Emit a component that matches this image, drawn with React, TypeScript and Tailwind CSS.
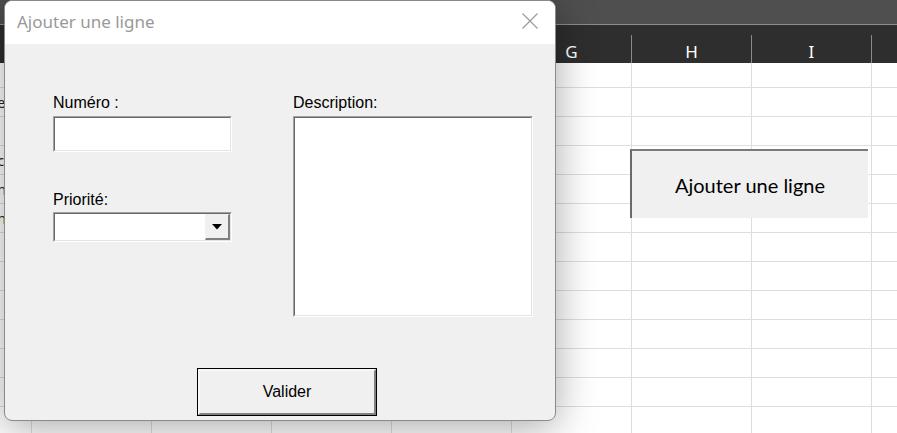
import React from "react";

const COLS = [0, 1, 2, 3, 4, 5, 6, 7];
const HEADERS = ["", "", "", "", "G", "H", "I", ""];
const ROW_CHARS = ["", "e", "", "c", "n", "n", "", "", "", "", "", "", ""];

function SheetRow({ first, char }: { first?: boolean; char: string }) {
  return (
    <div className={`flex border-b border-[#dedede] ${first ? "h-[25px]" : "h-[29px]"}`}>
      <div className="w-[32px] shrink-0 border-r border-[#dedede] relative overflow-hidden">
        {char && (
          <span className="absolute left-[-3px] top-[4px] text-[15px] leading-[20px] text-[#222]" style={{ fontFamily: "'Noto Sans', sans-serif" }}>
            {char}
          </span>
        )}
      </div>
      {COLS.map((c) => (
        <div key={c} className="w-[120px] shrink-0 border-r border-[#dedede]" />
      ))}
    </div>
  );
}

function Sunken({ className, children }: { className?: string; children?: React.ReactNode }) {
  return (
    <div className={`border-t border-l border-[#a0a0a0] border-b border-r border-b-white border-r-white ${className ?? ""}`}>
      <div className="w-full h-full bg-white border-t border-l border-[#696969] border-b border-r border-b-[#e3e3e3] border-r-[#e3e3e3] relative">
        {children}
      </div>
    </div>
  );
}

export default function App() {
  const label = { fontFamily: "'Liberation Sans', Arial, sans-serif" };
  return (
    <div className="relative w-[897px] h-[433px] overflow-hidden bg-white">
      {/* Excel sheet */}
      <div className="flex flex-col">
        <div className="h-[25px] bg-[#4f4f4f] border-b border-[#8c8c8c]" />
        <div className="h-[38px] bg-[#2e2e2e] flex items-end">
          <div className="w-[32px] shrink-0 h-[28px] border-r border-[#8a8a8a]" />
          {COLS.map((c) => (
            <div
              key={c}
              className="w-[120px] shrink-0 h-[28px] border-r border-[#8a8a8a] text-center text-white text-[17px] leading-[33px]"
              style={{ fontFamily: "'Noto Sans', sans-serif" }}
            >
              {HEADERS[c]}
            </div>
          ))}
        </div>
        {ROW_CHARS.map((ch, i) => (
          <SheetRow key={i} first={i === 0} char={ch} />
        ))}
      </div>

      {/* Sheet button */}
      <div
        className="absolute left-[630px] top-[149px] w-[238px] h-[69px] bg-[#f0f0f0] border-t-2 border-l-2 border-t-[#7a7a7a] border-l-[#6a6a6a] flex items-center justify-center text-[20px] text-black"
        style={{ fontFamily: "Lato, 'Noto Sans', sans-serif" }}
      >
        Ajouter une ligne
      </div>

      {/* Dialog */}
      <div className="absolute left-[4px] top-0 w-[552px] h-[421px] rounded-[8px] border border-[#8a8a8a] bg-[#f0f0f0] overflow-hidden shadow-[0_6px_40px_rgba(0,0,0,0.35)] flex flex-col">
        <div className="h-[43px] bg-white flex items-start justify-between pt-[9px] pl-[12px] pr-[17px]">
          <span className="text-[17px] leading-[24px] text-[#999999]" style={{ fontFamily: "'Noto Sans', sans-serif" }}>
            Ajouter une ligne
          </span>
          <svg width="16" height="16" viewBox="0 0 16 16" className="mt-[3px]">
            <path d="M0.5 0.5 L15.5 15.5 M15.5 0.5 L0.5 15.5" stroke="#9a9a9a" strokeWidth="1.2" fill="none" />
          </svg>
        </div>
        <div className="flex-1 flex flex-col pt-[50px] pl-[48px]">
          <div className="flex gap-[61px]">
            <div className="w-[179px] flex flex-col">
              <div className="text-[16px] leading-[18px] text-black" style={label}>Numéro :</div>
              <Sunken className="mt-[4px] h-[36px]" />
              <div className="mt-[39px] text-[16px] leading-[18px] text-black" style={label}>Priorité:</div>
              <Sunken className="mt-[3px] h-[30px]">
                <div className="absolute right-0 top-0 bottom-0 w-[25px] bg-[#f0f0f0] border-t border-l border-[#f0f0f0] border-b-2 border-r-2 border-b-[#808080] border-r-[#808080] flex items-center justify-center">
                  <svg width="10" height="6" viewBox="0 0 10 6">
                    <path d="M0 0 H10 L5 5.5 Z" fill="#000" />
                  </svg>
                </div>
              </Sunken>
            </div>
            <div className="w-[240px] flex flex-col">
              <div className="text-[16px] leading-[18px] text-black" style={label}>Description:</div>
              <Sunken className="mt-[4px] h-[201px]" />
            </div>
          </div>
          <div className="mt-[51px] ml-[144px] w-[180px] h-[48px] border border-black bg-[#f0f0f0]">
            <div className="w-full h-full border-t-2 border-l-2 border-t-[#f7f7f7] border-l-[#f7f7f7] border-b-2 border-r-2 border-b-[#808080] border-r-[#808080] flex items-center justify-center text-[16px] text-black" style={label}>
              Valider
            </div>
          </div>
        </div>
      </div>
    </div>
  );
}
